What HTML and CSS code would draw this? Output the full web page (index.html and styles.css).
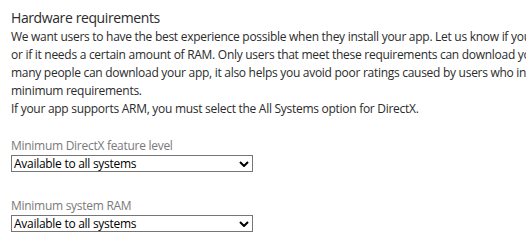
FILE: index.html
```html
<!DOCTYPE html>
<html lang="en">
<head>
    <meta charset="UTF-8">
    <meta name="viewport" content="width=device-width, initial-scale=1.0">
    <title>Hardware requirements</title>
    <link rel="stylesheet" href="styles.css">
</head>
<body>

    <div id="page">
        <h2>Hardware requirements</h2>
        <p class="intro">
            We want users to have the best experience possible when they install your app. Let us know if your app requires DirectX<br>
            or if it needs a certain amount of RAM. Only users that meet these requirements can download your app. This limits how<br>
            many people can download your app, it also helps you avoid poor ratings caused by users who install your app and don't meet the<br>
            minimum requirements.<br>
            If your app supports ARM, you must select the All Systems option for DirectX.
        </p>

        <div class="field">
            <label>Minimum DirectX feature level</label>
            <div class="select">
                <span>Available to all systems</span>
                <svg width="10" height="6" viewBox="0 0 10 6"><path d="M1 1 L5 5 L9 1" fill="none" stroke="#000" stroke-width="2"/></svg>
            </div>
        </div>

        <div class="field">
            <label>Minimum system RAM</label>
            <div class="select">
                <span>Available to all systems</span>
                <svg width="10" height="6" viewBox="0 0 10 6"><path d="M1 1 L5 5 L9 1" fill="none" stroke="#000" stroke-width="2"/></svg>
            </div>
        </div>
    </div>

</body>
</html>
```

FILE: styles.css
```css
/* General Styling */
body {
    font-family: 'Open Sans', sans-serif;
    background: #fff;
    color: #2b2b2b;
    margin: 0;
    padding: 0;
    overflow: hidden;
}

#page {
    padding: 8px 0 0 11px;
    white-space: nowrap;
    overflow: hidden;
}

h2 {
    font-size: 14px;
    font-weight: normal;
    letter-spacing: -0.4px;
    margin: 0;
    line-height: 20px;
}

/* Intro text */
.intro {
    font-size: 12px;
    letter-spacing: -0.28px;
    line-height: 18px;
    margin: 0 0 20px 0;
}

/* Dropdown fields */
.field {
    margin-bottom: 26px;
}

.field label {
    display: block;
    font-size: 12px;
    letter-spacing: -0.28px;
    line-height: 16px;
    color: #7a7a7a;
    margin-bottom: 1px;
}

.select {
    display: flex;
    align-items: center;
    justify-content: space-between;
    width: 235px;
    height: 15px;
    padding: 0 3px 0 2px;
    border: 1px solid #767676;
    font-size: 12px;
    letter-spacing: -0.28px;
    color: #000;
}
```
